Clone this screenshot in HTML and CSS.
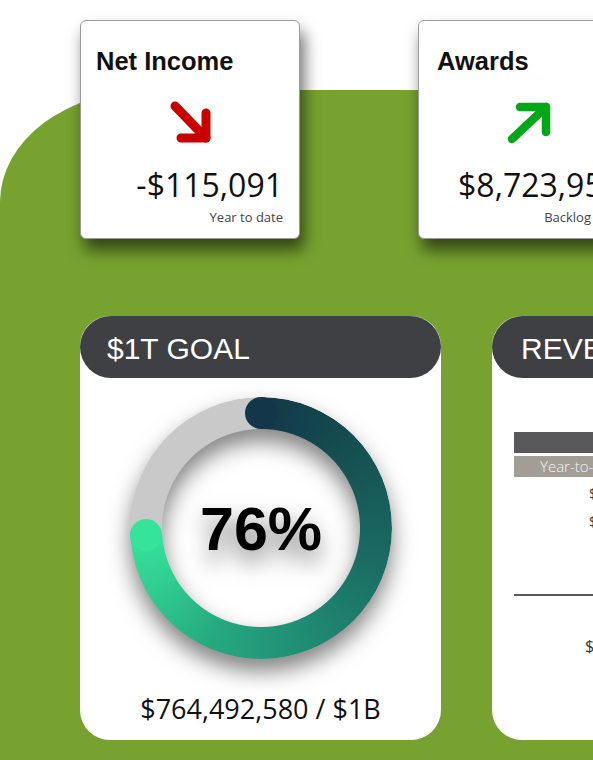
FILE: index.html
```html
<!DOCTYPE html>
<html lang="en">
<head>
<meta charset="utf-8">
<title>Dashboard</title>
<link rel="stylesheet" href="styles.css">
</head>
<body>
<main class="stage">
  <div class="kpis">
    <div class="card">
      <div class="card-title">Net Income</div>
      <svg class="card-arrow" viewBox="0 0 50 50" width="50" height="50">
        <g fill="none" stroke="#c80000" stroke-width="9" stroke-linecap="round" stroke-linejoin="round">
          <path d="M10 8 L41 40"/>
          <path d="M41 15 L41 40 L16 40"/>
        </g>
      </svg>
      <div class="card-value">-$115,091</div>
      <div class="card-sub">Year to date</div>
    </div>
    <div class="card card--awards">
      <div class="card-title">Awards</div>
      <svg class="card-arrow" viewBox="0 0 50 50" width="50" height="50">
        <g fill="none" stroke="#00a818" stroke-width="8.5" stroke-linecap="round" stroke-linejoin="round">
          <path d="M9 41 L43 9"/>
          <path d="M17 9 L43 9 L43 34"/>
        </g>
      </svg>
      <div class="card-value">$8,723,951</div>
      <div class="card-sub card-sub--shift">Backlog</div>
    </div>
  </div>

  <div class="panels">
    <section class="panel">
      <h2 class="panel-head">$1T GOAL</h2>
      <div class="donut">
        <div class="donut-ring"></div>
        <span class="donut-cap donut-cap--start"></span>
        <span class="donut-cap donut-cap--end"></span>
        <div class="donut-label">76%</div>
      </div>
      <div class="goal-total">$764,492,580 / $1B</div>
    </section>

    <section class="panel">
      <h2 class="panel-head panel-head--rev">REVENUE</h2>
      <div class="rev-table">
        <div class="rev-bar"></div>
        <div class="rev-colhead">Year-to-Date</div>
        <div class="rev-val rev-val--first">$412,506,120</div>
        <div class="rev-val">$351,986,460</div>
        <div class="rev-rule"></div>
        <div class="rev-total">$764,492,580</div>
      </div>
    </section>
  </div>
</main>
</body>
</html>
```

FILE: styles.css
```css
html, body {
  margin: 0;
  padding: 0;
  overflow: hidden;
  background: #ffffff;
}

body {
  width: 593px;
  height: 760px;
  font-family: "Liberation Sans", Arial, sans-serif;
}

.stage {
  display: flow-root;
  margin-top: 90px;
  height: 670px;
  background: #77a22f;
  border-top-left-radius: 150px 112px;
}

.kpis {
  display: flex;
  gap: 118px;
  padding-left: 80px;
  margin-top: -70px;
}

.card {
  flex-shrink: 0;
  box-sizing: border-box;
  width: 220px;
  height: 219px;
  background: #ffffff;
  border: 1px solid #9c9c9c;
  border-radius: 6px;
  box-shadow: 4px 11px 16px rgba(0, 0, 0, 0.58);
  padding: 25px 16px 0 15px;
  display: flex;
  flex-direction: column;
}

.card--awards {
  padding-left: 18px;
}

.card-title {
  font-family: "Liberation Sans", Arial, sans-serif;
  font-weight: 700;
  font-size: 25.5px;
  line-height: 30px;
  color: #111;
}

.card-arrow {
  display: block;
  align-self: center;
  margin-top: 22px;
  margin-left: 1px;
}

.card--awards .card-arrow {
  margin-left: -2px;
}

.card-value {
  margin-top: 17px;
  text-align: right;
  font-family: "Open Sans", "Noto Sans", sans-serif;
  font-size: 32px;
  line-height: 40px;
  color: #111;
  white-space: nowrap;
}

.card-sub {
  margin-top: 4px;
  text-align: right;
  font-family: "Open Sans", "Noto Sans", sans-serif;
  font-size: 13px;
  line-height: 16px;
  color: #444;
}

.card-sub--shift {
  padding-right: 30px;
}

.panels {
  display: flex;
  gap: 51px;
  padding-left: 80px;
  margin-top: 77px;
}

.panel {
  flex-shrink: 0;
  box-sizing: border-box;
  width: 361px;
  height: 424px;
  background: #ffffff;
  border-radius: 30px;
  display: flex;
  flex-direction: column;
}

.panel-head {
  margin: 0;
  box-sizing: border-box;
  height: 62px;
  padding: 2px 0 0 27px;
  line-height: 62px;
  border-radius: 31px;
  background: #3f4043;
  color: #ffffff;
  font-family: "Liberation Sans", Arial, sans-serif;
  font-weight: 400;
  font-size: 30px;
  white-space: nowrap;
}

.panel-head--rev {
  padding-left: 29px;
}

.donut {
  position: relative;
  align-self: center;
  width: 262px;
  height: 262px;
  margin-top: 19px;
  margin-left: 1px;
  display: grid;
  place-items: center;
  filter: drop-shadow(0 12px 11px rgba(0, 0, 0, 0.5));
}

.donut-ring {
  grid-area: 1 / 1;
  width: 262px;
  height: 262px;
  border-radius: 50%;
  background: conic-gradient(
    from 0deg,
    #133748 0deg,
    #155051 50deg,
    #1a6861 100deg,
    #1f8a72 155deg,
    #27aa80 205deg,
    #31d193 245deg,
    #36e39b 266.5deg,
    #c9c9c9 266.5deg,
    #c9c9c9 360deg
  );
  -webkit-mask: radial-gradient(circle closest-side, transparent 98.5px, #000 99.5px);
  mask: radial-gradient(circle closest-side, transparent 98.5px, #000 99.5px);
}

.donut-cap {
  position: absolute;
  width: 32px;
  height: 32px;
  border-radius: 50%;
}

.donut-cap--start {
  left: 115px;
  top: 0;
  background: #133748;
}

.donut-cap--end {
  left: 0;
  top: 122px;
  background: #36e39b;
}

.donut-label {
  grid-area: 1 / 1;
  padding-top: 3px;
  font-family: "Liberation Sans", Arial, sans-serif;
  font-weight: 700;
  font-size: 61px;
  line-height: 1;
  color: #000;
}

.goal-total {
  margin-top: 33px;
  text-align: center;
  font-family: "Open Sans", "Noto Sans", sans-serif;
  font-size: 27px;
  line-height: 34px;
  color: #111;
  white-space: nowrap;
}

.rev-table {
  margin: 54px 0 0 22px;
  width: 320px;
  display: flex;
  flex-direction: column;
}

.rev-bar {
  height: 21px;
  background: #59595b;
}

.rev-colhead {
  margin-top: 3px;
  height: 21px;
  width: 320px;
  background: #a39d97;
  color: #f4f4f4;
  font-family: "Open Sans", "Noto Sans", sans-serif;
  font-weight: 300;
  font-size: 15px;
  line-height: 21px;
  padding-left: 26px;
  box-sizing: border-box;
  white-space: nowrap;
}

.rev-val {
  padding-left: 75px;
  font-family: "Open Sans", "Noto Sans", sans-serif;
  font-size: 14px;
  line-height: 28px;
  color: #333;
  white-space: nowrap;
}

.rev-val--first {
  margin-top: 3px;
}

.rev-rule {
  margin-top: 58px;
  height: 2px;
  background: #5a5a5a;
}

.rev-total {
  margin-top: 38px;
  padding-left: 71px;
  font-family: "Open Sans", "Noto Sans", sans-serif;
  font-size: 16px;
  line-height: 24px;
  color: #333;
  white-space: nowrap;
}
```
